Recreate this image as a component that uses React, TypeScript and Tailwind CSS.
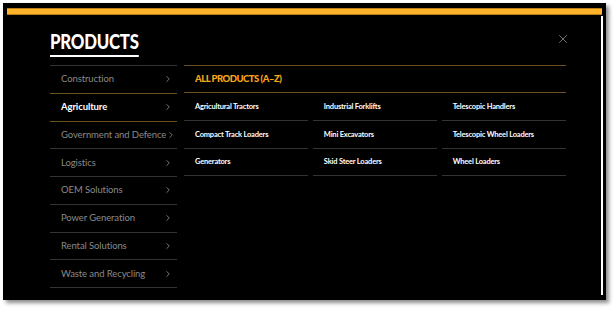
import { ChevronRight, X } from 'lucide-react'

const sectors = [
  'Construction',
  'Agriculture',
  'Government and Defence',
  'Logistics',
  'OEM Solutions',
  'Power Generation',
  'Rental Solutions',
  'Waste and Recycling',
]

const products = [
  'Agricultural Tractors',
  'Industrial Forklifts',
  'Telescopic Handlers',
  'Compact Track Loaders',
  'Mini Excavators',
  'Telescopic Wheel Loaders',
  'Generators',
  'Skid Steer Loaders',
  'Wheel Loaders',
]

const ACTIVE = 1

const App = () => {
  return (
    <div className="w-[616px] h-[309px] bg-white pt-[3px] pl-[3px]">
      <div
        className="w-[603px] h-[297px] bg-black flex flex-col shadow-[3px_3px_4px_rgba(0,0,0,0.45)]"
        style={{ fontFamily: 'Lato, "Open Sans", sans-serif' }}
      >
        <div className="mt-[5px] ml-[4px] w-[595px] h-[7px] bg-[#fdb42a] border-y border-[#b87d17]" />
        <div className="flex flex-1">
          <div className="flex-1 pl-[47px] pr-[35px]">
            <div className="flex items-start justify-between">
              <h1 className="mt-[14px] origin-left scale-x-[0.8] text-white font-black text-[21px] leading-[24px] tracking-[-0.3px] border-b-2 border-white pb-[2px]">
                PRODUCTS
              </h1>
              <X className="mt-[16.5px] -mr-[3.5px] w-[14px] h-[14px] text-[#b4b4b4]" strokeWidth={1.1} />
            </div>

            <div className="mt-[8px] flex gap-[7px]">
              <ul className="w-[127px] border-t border-[#333]">
                {sectors.map((s, i) => {
                  const active = i === ACTIVE
                  const goldBottom = i === ACTIVE || i === ACTIVE - 1
                  return (
                    <li
                      key={s}
                      className={`h-[27.75px] flex items-center justify-between pl-[11px] pr-[6px] border-b ${
                        goldBottom ? 'border-[#6a5020]' : 'border-[#333]'
                      } ${active ? 'text-white font-bold' : 'text-[#8a8a8a]'} text-[9.5px] tracking-[-0.1px] whitespace-nowrap`}
                    >
                      <span>{s}</span>
                      <ChevronRight className="w-[10px] h-[10px] text-[#c8c8c8] shrink-0 -mr-[2px]" strokeWidth={1.4} />
                    </li>
                  )
                })}
              </ul>

              <div className="flex-1">
                <div className="h-[28px] flex items-center pl-[11px] border-y border-[#6a5020] text-[#f7a81b] font-black text-[9.5px] tracking-[-0.5px]">
                  ALL PRODUCTS (A–Z)
                </div>
                <div className="grid grid-cols-3 gap-x-[4.5px]">
                  {products.map((p) => (
                    <div
                      key={p}
                      className="h-[27.75px] flex items-center pl-[11px] border-b border-[#333] text-white font-bold text-[7.5px] tracking-[-0.2px] whitespace-nowrap"
                    >
                      {p}
                    </div>
                  ))}
                </div>
              </div>
            </div>
          </div>
          <div className="w-[2px] bg-white mt-[1px] mb-[5px] mr-[3px]" />
        </div>
      </div>
    </div>
  )
}

export default App
